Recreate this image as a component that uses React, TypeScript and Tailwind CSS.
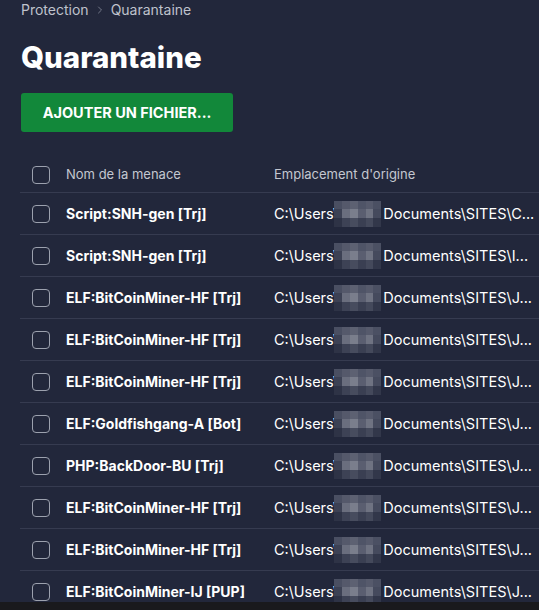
import { ChevronRight } from "lucide-react";

type Threat = { name: string; folder: string };

const threats: Threat[] = [
  { name: "Script:SNH-gen [Trj]", folder: "C..." },
  { name: "Script:SNH-gen [Trj]", folder: "I..." },
  { name: "ELF:BitCoinMiner-HF [Trj]", folder: "J..." },
  { name: "ELF:BitCoinMiner-HF [Trj]", folder: "J..." },
  { name: "ELF:BitCoinMiner-HF [Trj]", folder: "J..." },
  { name: "ELF:Goldfishgang-A [Bot]", folder: "J..." },
  { name: "PHP:BackDoor-BU [Trj]", folder: "J..." },
  { name: "ELF:BitCoinMiner-HF [Trj]", folder: "J..." },
  { name: "ELF:BitCoinMiner-HF [Trj]", folder: "J..." },
  { name: "ELF:BitCoinMiner-IJ [PUP]", folder: "J..." },
];

// pixelated user name, a few shades per block
const mosaic = [
  ["bg-[#4a4f62]", "bg-[#55596b]", "bg-[#5d6172]", "bg-[#4f5467]", "bg-[#565a6c]", "bg-[#4b5063]"],
  ["bg-[#3c4154]", "bg-[#6a6e7e]", "bg-[#7a7e8c]", "bg-[#5a5e70]", "bg-[#6f7382]", "bg-[#454a5d]"],
  ["bg-[#2e3346]", "bg-[#3d4255]", "bg-[#474c5e]", "bg-[#3a3f52]", "bg-[#44495b]", "bg-[#32374a]"],
];

function Checkbox() {
  return <span className="block h-[18px] w-[18px] rounded-[4px] border-[1.5px] border-[#9ca1ae]" />;
}

function Blur() {
  return (
    <span className="-ml-[4px] flex h-[26px] w-[47px] shrink-0 flex-col">
      {mosaic.map((row, i) => (
        <span key={i} className="flex flex-1">
          {row.map((c, j) => (
            <span key={j} className={`flex-1 ${c}`} />
          ))}
        </span>
      ))}
    </span>
  );
}

export default function App() {
  return (
    <div
      className="flex h-[610px] w-[539px] flex-col overflow-hidden bg-[#22273b] text-white"
      style={{ fontFamily: "Inter, 'Liberation Sans', sans-serif" }}
    >
      <div className="min-h-0 flex-1 overflow-hidden">
        <nav className="flex items-center gap-[5px] px-[21px] text-[14px] leading-[20px] text-[#bfc2cc]">
          <span>Protection</span>
          <ChevronRight className="h-3 w-3 text-[#737889]" strokeWidth={2} />
          <span>Quarantaine</span>
        </nav>

        <h1 className="mt-[20px] px-[21px] text-[29.5px] font-extrabold leading-[34px]">Quarantaine</h1>

        <div className="mt-[19px] px-[21px]">
          <button
            type="button"
            className="h-[39px] w-[212px] rounded-[3px] bg-[#12883a] text-[14.5px] font-bold text-white"
          >
            AJOUTER UN FICHIER...
          </button>
        </div>

        <div className="mt-[26px] pl-[20px]">
          <div className="flex h-[35px] items-center border-b border-[#363b50] text-[13px] text-[#c4c7d0]">
            <div className="w-[46px] pl-[12px]">
              <Checkbox />
            </div>
            <div className="w-[208px]">Nom de la menace</div>
            <div>Emplacement d'origine</div>
          </div>

          {threats.map((t, i) => (
            <div key={i} className="flex h-[42px] items-center border-b border-[#363b50] text-[14px]">
              <div className="w-[46px] pl-[12px]">
                <Checkbox />
              </div>
              <div className="w-[208px] truncate font-bold">{t.name}</div>
              <div className="flex min-w-0 flex-1 items-center whitespace-nowrap text-[14.5px]">
                <span>C:\Users\</span>
                <Blur />
                <span className="ml-[2px]">Documents\SITES\{t.folder}</span>
              </div>
            </div>
          ))}
        </div>
      </div>
      <div className="h-[8px] shrink-0 bg-[#19191d]" />
    </div>
  );
}
